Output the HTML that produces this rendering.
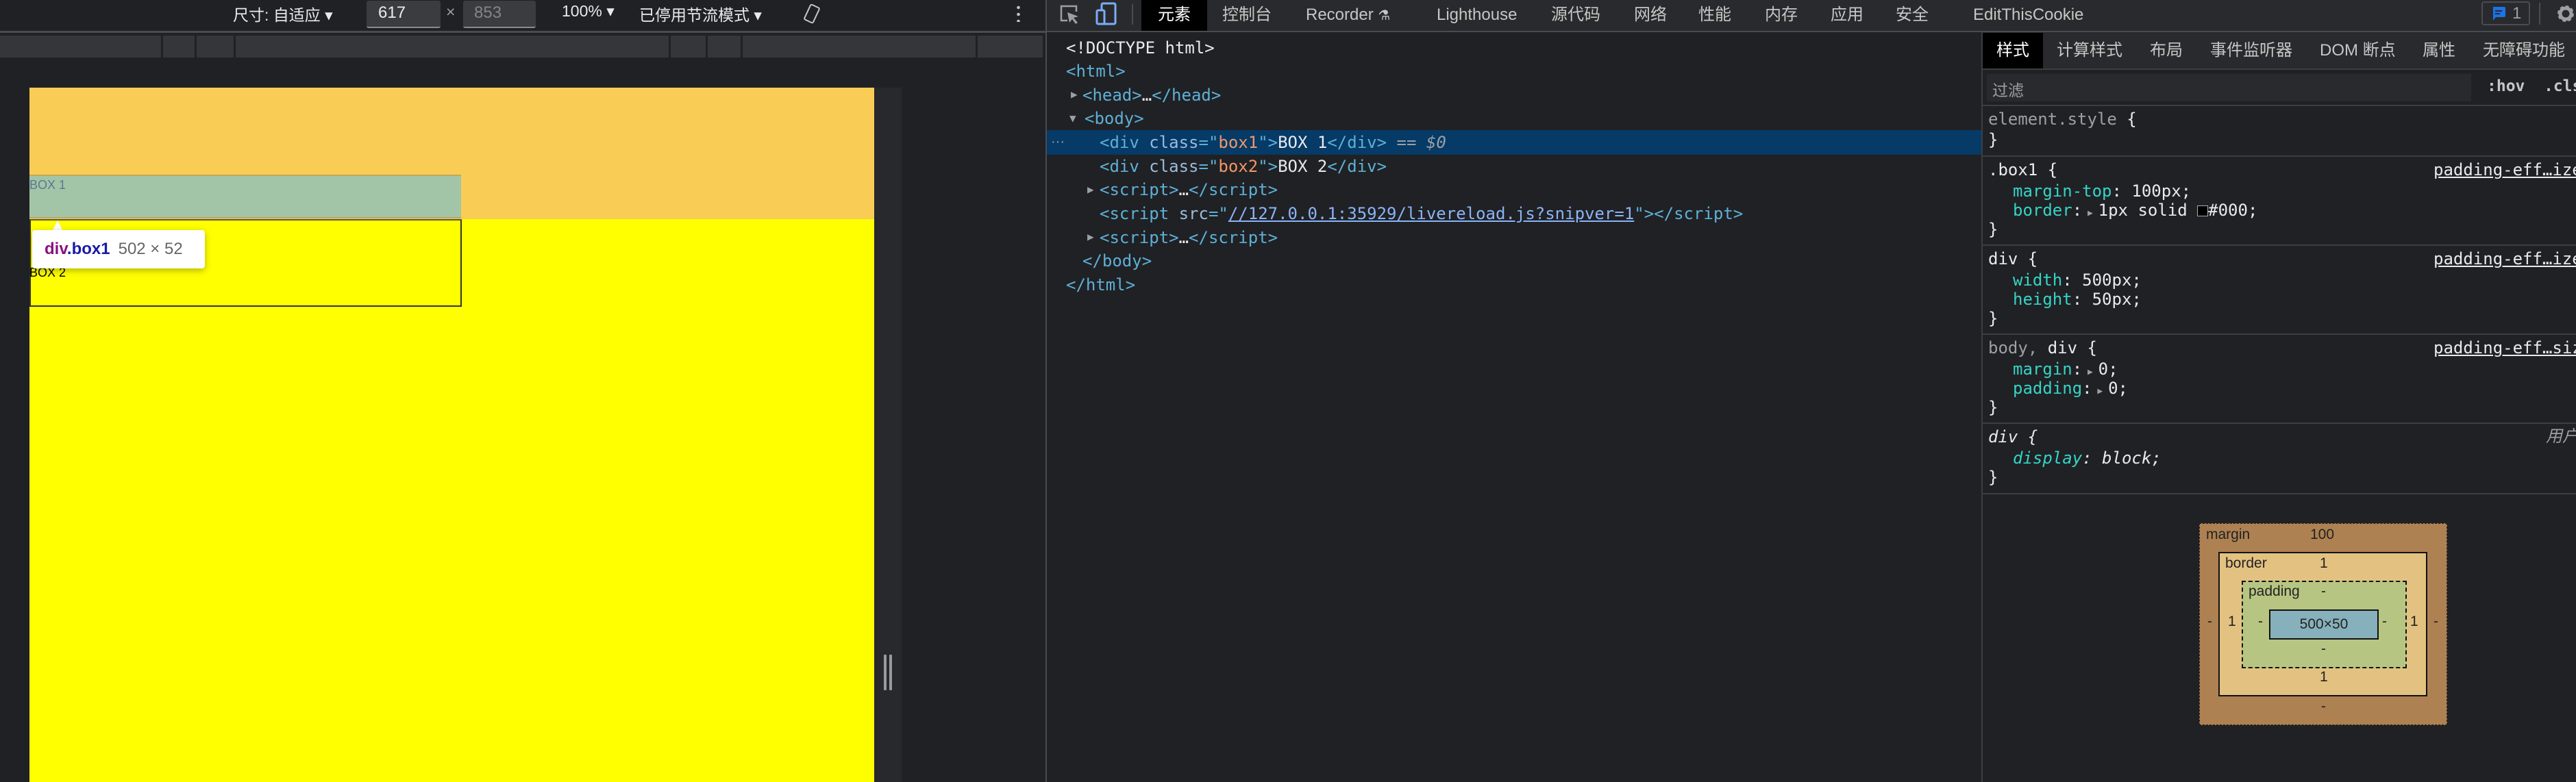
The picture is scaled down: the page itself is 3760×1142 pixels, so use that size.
<!DOCTYPE html>
<html><head><meta charset="utf-8"><style>
*{margin:0;padding:0;box-sizing:border-box}
body{width:3760px;height:1142px;background:#202124;position:relative;overflow:hidden;font-family:"Liberation Sans","Noto Sans CJK SC",sans-serif;color:#e8eaed}
.a{position:absolute;white-space:nowrap}
.m{font-family:"DejaVu Sans Mono","Liberation Mono","Noto Sans CJK SC",monospace}
.tg{color:#5db0d7}.an{color:#9bbbdc}.av{color:#f29766}.pr{color:#35d4c7}
.dom{font-size:24px;line-height:34px}
.css{font-size:24px;line-height:28px}
.lk{color:#e8eaed;text-decoration:underline;font-size:24px}
.sep{position:absolute;left:2892px;width:868px;height:2px;background:#3c3d41}
.tab{position:absolute;top:0;font-size:24px;line-height:44px;color:#c4c7c5}
.st{position:absolute;top:48px;font-size:24px;line-height:52px;color:#c4c7c5}
</style></head><body>
<div class="a" style="left:0;top:0;width:1526px;height:46px;background:#202124"></div>
<div class="a" style="left:0;top:45px;width:1526px;height:3px;background:#4a4c50"></div>
<div class="a" style="left:340px;top:3px;font-size:23px;color:#e8eaed">尺寸: 自适应 ▾</div>
<div class="a" style="left:535px;top:1px;width:108px;height:40px;background:#3b3c3f;border-bottom:2px solid #8a8b8e;border-radius:3px;font-size:24px;padding:4px 0 0 17px;color:#e8eaed">617</div>
<div class="a" style="left:651px;top:4px;font-size:23px;color:#9aa0a6">×</div>
<div class="a" style="left:676px;top:1px;width:106px;height:40px;background:#3b3c3f;border-bottom:2px solid #8a8b8e;border-radius:3px;font-size:24px;padding:4px 0 0 16px;color:#80868b">853</div>
<div class="a" style="left:820px;top:3px;font-size:23px;color:#e8eaed">100% ▾</div>
<div class="a" style="left:933px;top:3px;font-size:23px;color:#e8eaed">已停用节流模式 ▾</div>
<svg class="a" style="left:1170px;top:4px" width="30" height="32" viewBox="0 0 30 32"><rect x="8" y="4" width="14" height="24" rx="2" transform="rotate(25 15 16)" fill="none" stroke="#c4c7c5" stroke-width="2"/></svg>
<div class="a" style="left:1484px;top:6px;width:5px;height:26px;background:radial-gradient(circle,#c4c7c5 2px,transparent 2.5px) 0 0/5px 10px"></div>
<div class="a" style="left:0;top:52px;width:1522px;height:32px;background:#35363a"></div>
<div class="a" style="left:235px;top:52px;width:3px;height:32px;background:#202124"></div>
<div class="a" style="left:284px;top:52px;width:3px;height:32px;background:#202124"></div>
<div class="a" style="left:341px;top:52px;width:3px;height:32px;background:#202124"></div>
<div class="a" style="left:976px;top:52px;width:3px;height:32px;background:#202124"></div>
<div class="a" style="left:1030px;top:52px;width:3px;height:32px;background:#202124"></div>
<div class="a" style="left:1081px;top:52px;width:3px;height:32px;background:#202124"></div>
<div class="a" style="left:1424px;top:52px;width:3px;height:32px;background:#202124"></div>
<div class="a" style="left:43px;top:128px;width:1233px;height:1014px;background:#ffff00"></div>
<div class="a" style="left:43px;top:128px;width:1233px;height:192px;background:#f9cc55"></div>
<div class="a" style="left:43px;top:255px;width:630px;height:64px;background:#a2c5a8;border-top:2px solid #c2a85a;border-bottom:2px solid #c2a85a"></div>
<div class="a" style="left:43px;top:260px;font-size:18px;color:#5a7890">BOX 1</div>
<div class="a" style="left:43px;top:320px;width:631px;height:128px;border:2px solid #333;border-top-color:#555"></div>
<div class="a" style="left:43px;top:388px;font-size:18px;color:#000">BOX 2</div>
<div class="a" style="left:1276px;top:128px;width:40px;height:1014px;background:#28292d"></div>
<div class="a" style="left:1290px;top:956px;width:4px;height:52px;background:#9a9a9a;border-radius:1px"></div>
<div class="a" style="left:1298px;top:956px;width:4px;height:52px;background:#9a9a9a;border-radius:1px"></div>
<div class="a" style="left:76px;top:322px;width:0;height:0;border-left:8px solid transparent;border-right:8px solid transparent;border-bottom:16px solid #fff"></div>
<div class="a" style="left:47px;top:336px;width:252px;height:56px;background:#fff;border-radius:4px;box-shadow:0 3px 10px rgba(0,0,0,.3);font-size:24px;padding:14px 0 0 18px"><b style="color:#881280">div</b><b style="color:#1a1aa6">.box1</b><span style="color:#666;margin-left:12px">502 × 52</span></div>
<div class="a" style="left:1526px;top:0;width:2px;height:1142px;background:#4a4c50"></div>
<div class="a" style="left:1528px;top:0;width:2232px;height:45px;background:#292a2d"></div>
<div class="a" style="left:1528px;top:45px;width:2232px;height:2px;background:#494c50"></div>
<svg class="a" style="left:1546px;top:6px" width="32" height="30" viewBox="0 0 32 30"><path d="M12 24H3V3h22v8" fill="none" stroke="#9aa0a6" stroke-width="2.5"/><path d="M12 12l16 6-7 2 6 7-3 2-5-7-4 5z" fill="#9aa0a6"/></svg>
<svg class="a" style="left:1598px;top:3px" width="34" height="34" viewBox="0 0 34 34"><rect x="10" y="2" width="20" height="30" rx="2" fill="none" stroke="#7cacf8" stroke-width="3"/><rect x="3" y="12" width="11" height="20" rx="2" fill="#292a2d" stroke="#7cacf8" stroke-width="3"/></svg>
<div class="a" style="left:1652px;top:6px;width:2px;height:30px;background:#4a4c50"></div>
<div class="a" style="left:1666px;top:0;width:96px;height:45px;background:#000"></div>
<div class="tab" style="left:1690px;color:#fff">元素</div>
<div class="tab" style="left:1784px">控制台</div>
<div class="tab" style="left:1906px">Recorder <span style="font-size:20px">⚗</span></div>
<div class="tab" style="left:2097px">Lighthouse</div>
<div class="tab" style="left:2264px">源代码</div>
<div class="tab" style="left:2385px">网络</div>
<div class="tab" style="left:2479px">性能</div>
<div class="tab" style="left:2576px">内存</div>
<div class="tab" style="left:2672px">应用</div>
<div class="tab" style="left:2767px">安全</div>
<div class="tab" style="left:2880px">EditThisCookie</div>
<div class="a" style="left:3622px;top:2px;width:71px;height:35px;border:2px solid #4a4c50;border-radius:4px"></div>
<svg class="a" style="left:3636px;top:9px" width="22" height="22" viewBox="0 0 22 22"><path d="M3 1h16a2 2 0 0 1 2 2v11a2 2 0 0 1-2 2H7l-4 5z" fill="#1a73e8"/><rect x="6" y="6" width="10" height="2" fill="#292a2d"/><rect x="6" y="10" width="7" height="2" fill="#292a2d"/></svg>
<div class="a" style="left:3667px;top:6px;font-size:24px;color:#9aa0a6">1</div>
<div class="a" style="left:3706px;top:4px;width:2px;height:32px;background:#4a4c50"></div>
<svg class="a" style="left:3730px;top:5px" width="30" height="30" viewBox="0 0 30 30"><circle cx="15" cy="15" r="9" fill="none" stroke="#9aa0a6" stroke-width="6" stroke-dasharray="4 3"/><circle cx="15" cy="15" r="8" fill="none" stroke="#9aa0a6" stroke-width="5"/></svg>
<div class="a" style="left:1528px;top:190px;width:1364px;height:36px;background:#063a67"></div>
<div class="a" style="left:1534px;top:196px;font-size:20px;color:#9aa0a6">···</div>
<div class="a m dom" style="left:1556px;top:53px">&lt;!DOCTYPE html&gt;</div>
<div class="a m dom tg" style="left:1556px;top:87px">&lt;html&gt;</div>
<div class="a m dom" style="left:1563px;top:121px;font-size:16px;color:#9aa0a6">▶</div>
<div class="a m dom tg" style="left:1580px;top:122px">&lt;head&gt;<span style="color:#e8eaed">…</span>&lt;/head&gt;</div>
<div class="a m dom" style="left:1561px;top:156px;font-size:16px;color:#9aa0a6">▼</div>
<div class="a m dom tg" style="left:1583px;top:156px">&lt;body&gt;</div>
<div class="a m dom" style="left:1605px;top:191px"><span class="tg">&lt;div </span><span class="an">class</span><span class="tg">="</span><span class="av">box1</span><span class="tg">"&gt;</span>BOX 1<span class="tg">&lt;/div&gt;</span> <span style="color:#9aa0a6">== <i>$0</i></span></div>
<div class="a m dom" style="left:1605px;top:226px"><span class="tg">&lt;div </span><span class="an">class</span><span class="tg">="</span><span class="av">box2</span><span class="tg">"&gt;</span>BOX 2<span class="tg">&lt;/div&gt;</span></div>
<div class="a m dom" style="left:1587px;top:260px;font-size:16px;color:#9aa0a6">▶</div>
<div class="a m dom tg" style="left:1605px;top:260px">&lt;script&gt;<span style="color:#e8eaed">…</span>&lt;/script&gt;</div>
<div class="a m dom" style="left:1605px;top:295px"><span class="tg">&lt;script </span><span class="an">src</span><span class="tg">="</span><span style="color:#8ab4f8;text-decoration:underline">//127.0.0.1:35929/livereload.js?snipver=1</span><span class="tg">"&gt;&lt;/script&gt;</span></div>
<div class="a m dom" style="left:1587px;top:329px;font-size:16px;color:#9aa0a6">▶</div>
<div class="a m dom tg" style="left:1605px;top:330px">&lt;script&gt;<span style="color:#e8eaed">…</span>&lt;/script&gt;</div>
<div class="a m dom tg" style="left:1580px;top:364px">&lt;/body&gt;</div>
<div class="a m dom tg" style="left:1556px;top:399px">&lt;/html&gt;</div>
<div class="a" style="left:2892px;top:47px;width:2px;height:1095px;background:#3c3d41"></div>
<div class="a" style="left:2894px;top:47px;width:866px;height:53px;background:#292a2d"></div>
<div class="a" style="left:2894px;top:48px;width:88px;height:52px;background:#000"></div>
<div class="st" style="left:2914px;color:#fff">样式</div>
<div class="st" style="left:3002px">计算样式</div>
<div class="st" style="left:3138px">布局</div>
<div class="st" style="left:3226px">事件监听器</div>
<div class="st" style="left:3386px">DOM 断点</div>
<div class="st" style="left:3536px">属性</div>
<div class="st" style="left:3624px">无障碍功能</div>
<div class="sep" style="top:100px"></div>
<div class="a" style="left:2900px;top:108px;width:707px;height:40px;background:#292a2d"></div>
<div class="a" style="left:2908px;top:113px;font-size:23px;color:#9aa0a6">过滤</div>
<div class="a m" style="left:3630px;top:113px;font-size:23px;color:#c4c7c5;font-weight:bold">:hov&nbsp;&nbsp;.cls</div>
<div class="sep" style="top:153px"></div>
<div class="a m css" style="left:2902px;top:160px;color:#9aa0a6">element.style <span style="color:#e8eaed">{</span></div>
<div class="a m css" style="left:2902px;top:190px">}</div>
<div class="sep" style="top:227px"></div>
<div class="a m css" style="left:2902px;top:234px">.box1 {</div>
<div class="a m css lk" style="left:3552px;top:234px">padding-eff…ize</div>
<div class="a m css" style="left:2938px;top:265px"><span class="pr">margin-top</span>: 100px;</div>
<div class="a m css" style="left:2938px;top:293px"><span class="pr">border</span>:<span style="font-size:13px;color:#9aa0a6"> ▶ </span>1px solid <span style="display:inline-block;width:16px;height:16px;background:#000;border:1px solid #aaa;vertical-align:-1px"></span>#000;</div>
<div class="a m css" style="left:2902px;top:321px">}</div>
<div class="sep" style="top:357px"></div>
<div class="a m css" style="left:2902px;top:364px">div {</div>
<div class="a m css lk" style="left:3552px;top:364px">padding-eff…ize</div>
<div class="a m css" style="left:2938px;top:395px"><span class="pr">width</span>: 500px;</div>
<div class="a m css" style="left:2938px;top:423px"><span class="pr">height</span>: 50px;</div>
<div class="a m css" style="left:2902px;top:451px">}</div>
<div class="sep" style="top:487px"></div>
<div class="a m css" style="left:2902px;top:494px"><span style="color:#9aa0a6">body,</span> div {</div>
<div class="a m css lk" style="left:3552px;top:494px">padding-eff…siz</div>
<div class="a m css" style="left:2938px;top:525px"><span class="pr">margin</span>:<span style="font-size:13px;color:#9aa0a6"> ▶ </span>0;</div>
<div class="a m css" style="left:2938px;top:553px"><span class="pr">padding</span>:<span style="font-size:13px;color:#9aa0a6"> ▶ </span>0;</div>
<div class="a m css" style="left:2902px;top:581px">}</div>
<div class="sep" style="top:617px"></div>
<div class="a m css" style="left:2902px;top:624px;font-style:italic">div {</div>
<div class="a css" style="left:3716px;top:624px;font-style:italic;color:#9aa0a6">用户</div>
<div class="a m css" style="left:2938px;top:655px;font-style:italic"><span class="pr">display</span>: block;</div>
<div class="a m css" style="left:2902px;top:683px">}</div>
<div class="sep" style="top:720px"></div>
<div class="a" style="left:3210px;top:764px;width:362px;height:295px;background:#ae8152;border:1px dashed #222"></div>
<div class="a" style="left:3220px;top:769px;font-size:21px;color:#222">margin</div>
<div class="a" style="left:3372px;top:769px;font-size:21px;color:#222">100</div>
<div class="a" style="left:3222px;top:896px;font-size:21px;color:#222">-</div>
<div class="a" style="left:3552px;top:896px;font-size:21px;color:#222">-</div>
<div class="a" style="left:3388px;top:1020px;font-size:21px;color:#222">-</div>
<div class="a" style="left:3238px;top:806px;width:305px;height:211px;background:#e3c281;border:2px solid #111"></div>
<div class="a" style="left:3248px;top:811px;font-size:21px;color:#222">border</div>
<div class="a" style="left:3386px;top:811px;font-size:21px;color:#222">1</div>
<div class="a" style="left:3252px;top:896px;font-size:21px;color:#222">1</div>
<div class="a" style="left:3518px;top:896px;font-size:21px;color:#222">1</div>
<div class="a" style="left:3386px;top:977px;font-size:21px;color:#222">1</div>
<div class="a" style="left:3272px;top:848px;width:241px;height:128px;background:#b7c582;border:2px dashed #111"></div>
<div class="a" style="left:3282px;top:852px;font-size:21px;color:#222">padding</div>
<div class="a" style="left:3388px;top:852px;font-size:21px;color:#222">-</div>
<div class="a" style="left:3296px;top:896px;font-size:21px;color:#222">-</div>
<div class="a" style="left:3477px;top:896px;font-size:21px;color:#222">-</div>
<div class="a" style="left:3388px;top:936px;font-size:21px;color:#222">-</div>
<div class="a" style="left:3312px;top:890px;width:160px;height:44px;background:#86b0bb;border:2px solid #111;font-size:21px;color:#222;text-align:center;line-height:40px">500×50</div>
</body></html>
